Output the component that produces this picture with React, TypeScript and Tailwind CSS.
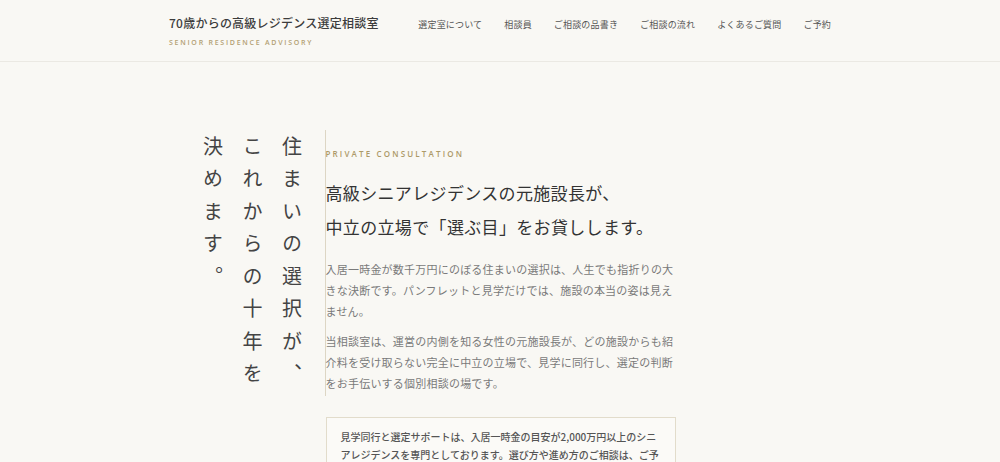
const navItems = ["選定室について", "相談員", "ご相談の品書き", "ご相談の流れ", "よくあるご質問", "ご予約"];

const jp = { fontFamily: '"Noto Sans CJK JP", "Noto Sans", sans-serif' };
const latin = { fontFamily: '"Open Sans", "Liberation Sans", sans-serif' };

export default function App() {
  return (
    <div className="min-h-screen bg-[#f9f8f4] text-[#3a3a3a]" style={jp}>
      <header className="h-[62px] border-b border-[#ebe9e3]">
        <div className="mx-auto flex w-[662px] items-start justify-between">
          <div className="pt-[15px]">
            <div className="text-[12px] leading-[16px] tracking-[0.02em] font-medium text-[#3c3c3c]">
              70歳からの高級レジデンス選定相談室
            </div>
            <div className="mt-[8px] text-[7px] leading-none tracking-[0.25em] font-semibold text-[#b3a073]" style={latin}>
              SENIOR RESIDENCE ADVISORY
            </div>
          </div>
          <nav className="flex gap-[22px] pt-[19px]">
            {navItems.map((item) => (
              <a key={item} className="text-[9px] leading-[12px] tracking-[0.02em] text-[#555]">
                {item}
              </a>
            ))}
          </nav>
        </div>
      </header>

      <main className="pt-[68px]">
        <div className="mx-auto flex w-[662px] items-start pl-[24px]">
          <div className="border-r border-[#ddd6c4] pr-[13px] pt-[6px]">
            <h1 className="text-[20px] leading-[39.5px] tracking-[12.5px] text-[#444] [writing-mode:vertical-rl]">
              住まいの選択が、
              <br />
              これからの十年を
              <br />
              決めます。
            </h1>
          </div>

          <div className="w-[350px] pt-[20px]">
            <div className="text-[8px] leading-none tracking-[0.27em] font-semibold text-[#ad9a68]" style={latin}>
              PRIVATE CONSULTATION
            </div>
            <h2 className="mt-[18px] text-[17px] leading-[34px] tracking-[0.02em] text-[#333]">
              高級シニアレジデンスの元施設長が、
              <br />
              中立の立場で「選ぶ目」をお貸しします。
            </h2>
            <p className="mt-[15px] text-[11px] leading-[21px] tracking-[0.02em] text-[#7a7a7a]">
              入居一時金が数千万円にのぼる住まいの選択は、人生でも指折りの大きな決断です。パンフレットと見学だけでは、施設の本当の姿は見えません。
            </p>
            <p className="mt-[9px] text-[11px] leading-[21px] tracking-[0.02em] text-[#7a7a7a]">
              当相談室は、運営の内側を知る女性の元施設長が、どの施設からも紹介料を受け取らない完全に中立の立場で、見学に同行し、選定の判断をお手伝いする個別相談の場です。
            </p>
            <div className="mt-[23px] border border-[#e2dccb] bg-[#fbfaf7] px-[14px] py-[10px]">
              <p className="text-[10px] leading-[18px] font-medium text-[#555]">
                見学同行と選定サポートは、入居一時金の目安が2,000万円以上のシニアレジデンスを専門としております。選び方や進め方のご相談は、ご予算にかかわらずお気軽にお問い合わせください。
              </p>
            </div>
          </div>
        </div>
      </main>
    </div>
  );
}
